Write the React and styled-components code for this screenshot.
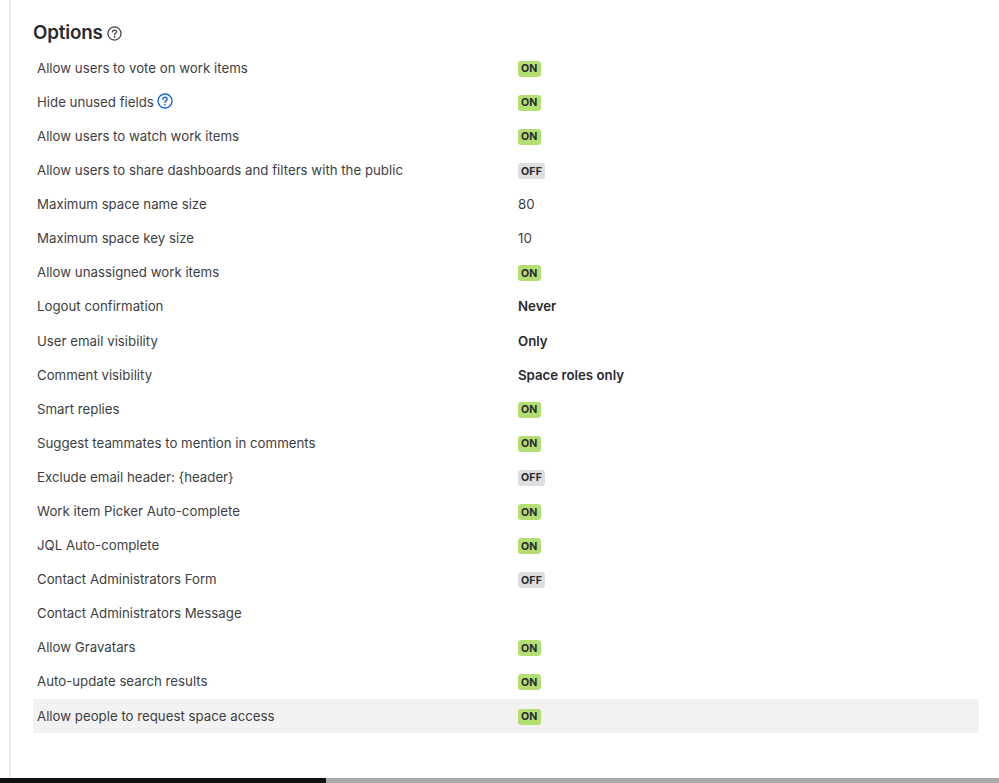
import React from "react";
import styled, { createGlobalStyle } from "styled-components";

const Global = createGlobalStyle`
  html, body { margin: 0; padding: 0; background: #fff; }
  body { font-family: Inter, "Liberation Sans", sans-serif; color: #292a2e; overflow: hidden; }
`;
const Page = styled.div`
  width: 999px; height: 783px; display: flex; flex-direction: column; overflow: hidden;
`;
const Panel = styled.main`
  height: 778px; box-sizing: border-box; margin-left: 9px; border-left: 2px solid #ececee;
  padding: 20px 20px 0 22px;
`;
const Heading = styled.h2`
  margin: 0 0 6.75px; height: 24px; display: flex; align-items: center; gap: 4px;
  font-size: 18.8px; font-weight: 600; letter-spacing: -0.2px; color: #292a2e;
  svg { margin-top: 2px; }
`;
const Rows = styled.div`display: flex; flex-direction: column;`;
const Row = styled.div`
  height: 34.1px; display: grid; grid-template-columns: 485px 1fr; align-items: center;
  background: ${p => (p.$hl ? "#f2f2f2" : "transparent")};
`;
const Label = styled.div`
  padding-left: 4px; font-size: 13.25px; line-height: 20px; color: #3d3e43;
  display: flex; align-items: center; gap: 3px;
  svg { margin-top: -1px; }
`;
const Value = styled.div`font-size: 13.25px; color: #3d3e43;`;
const Strong = styled.div`font-size: 13.25px; font-weight: 600; color: #292a2e;`;
const BadgeCell = styled.div`display: flex; align-items: center; height: 16px; margin-top: 2px;`;
const Badge = styled.span`
  display: flex; align-items: center; justify-content: center;
  height: 16px; padding: 0 3px; border-radius: 3px;
  font-size: 10.6px; font-weight: 700; letter-spacing: 0.2px; color: #292a2e;
  background: ${p => (p.$on ? "#b3df72" : "#dddee1")};
`;
const Footer = styled.div`height: 5px; display: flex;`;
const Dark = styled.div`width: 326px; background: #111;`;
const Track = styled.div`flex: 1; background: #a9a9a9;`;

const Help = ({ size, color, sw }) => (
  <svg width={size} height={size} viewBox="0 0 16 16" fill="none" aria-hidden="true">
    <circle cx="8" cy="8" r="7" stroke={color} strokeWidth={sw} />
    <path d="M5.9 6.3c0-1.2 1-2 2.1-2s2.1.8 2.1 1.9c0 1.7-2.1 1.6-2.1 3.2" stroke={color} strokeWidth={sw} strokeLinecap="round" />
    <circle cx="8" cy="11.6" r=".9" fill={color} />
  </svg>
);

const rows = [
  ["Allow users to vote on work items", "on"],
  ["Hide unused fields", "on", true],
  ["Allow users to watch work items", "on"],
  ["Allow users to share dashboards and filters with the public", "off"],
  ["Maximum space name size", "v:80"],
  ["Maximum space key size", "v:10"],
  ["Allow unassigned work items", "on"],
  ["Logout confirmation", "s:Never"],
  ["User email visibility", "s:Only"],
  ["Comment visibility", "s:Space roles only"],
  ["Smart replies", "on"],
  ["Suggest teammates to mention in comments", "on"],
  ["Exclude email header: {header}", "off"],
  ["Work item Picker Auto-complete", "on"],
  ["JQL Auto-complete", "on"],
  ["Contact Administrators Form", "off"],
  ["Contact Administrators Message", ""],
  ["Allow Gravatars", "on"],
  ["Auto-update search results", "on"],
  ["Allow people to request space access", "on"],
];

const renderValue = v => {
  if (v === "on") return <BadgeCell><Badge $on>ON</Badge></BadgeCell>;
  if (v === "off") return <BadgeCell><Badge>OFF</Badge></BadgeCell>;
  if (v.startsWith("v:")) return <Value>{v.slice(2)}</Value>;
  if (v.startsWith("s:")) return <Strong>{v.slice(2)}</Strong>;
  return null;
};

export default function App() {
  return (
    <Page>
      <Global />
      <Panel>
        <Heading>Options <Help size={15} color="#44454a" sw={1.4} /></Heading>
        <Rows>
          {rows.map(([label, v, help], i) => (
            <Row key={label} $hl={i === rows.length - 1}>
              <Label>{label}{help && <Help size={16} color="#1868db" sw={1.4} />}</Label>
              <div>{renderValue(v)}</div>
            </Row>
          ))}
        </Rows>
      </Panel>
      <Footer><Dark /><Track /></Footer>
    </Page>
  );
}
